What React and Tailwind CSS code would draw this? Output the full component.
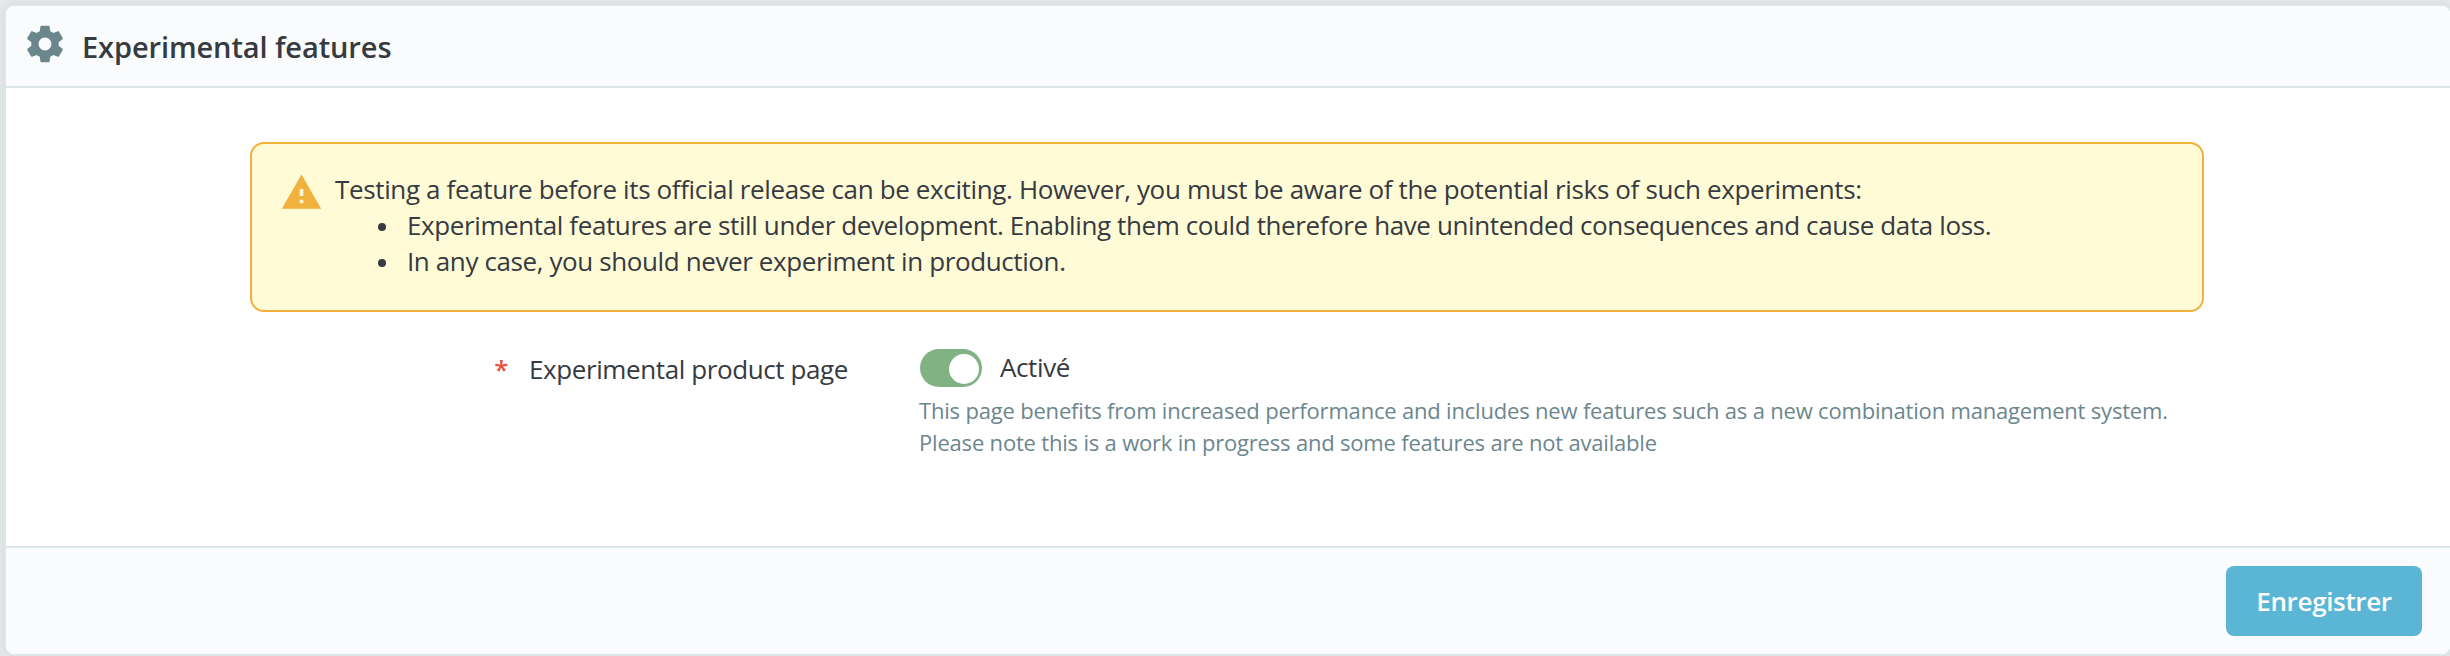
function GearIcon() {
  return (
    <svg viewBox="0 0 24 24" className="size-11 shrink-0 fill-[#6c868e]" aria-hidden="true">
      <path d="M19.43 12.98c.04-.32.07-.64.07-.98s-.03-.66-.07-.98l2.11-1.65c.19-.15.24-.42.12-.64l-2-3.46c-.12-.22-.39-.3-.61-.22l-2.49 1c-.52-.4-1.08-.73-1.69-.98l-.38-2.65C14.46 2.18 14.25 2 14 2h-4c-.25 0-.46.18-.49.42l-.38 2.65c-.61.25-1.17.59-1.69.98l-2.49-1c-.23-.09-.49 0-.61.22l-2 3.46c-.13.22-.07.49.12.64l2.11 1.65c-.04.32-.07.65-.07.98s.03.66.07.98l-2.11 1.65c-.19.15-.24.42-.12.64l2 3.46c.12.22.39.3.61.22l2.49-1c.52.4 1.08.73 1.69.98l.38 2.65c.03.24.24.42.49.42h4c.25 0 .46-.18.49-.42l.38-2.65c.61-.25 1.17-.59 1.69-.98l2.49 1c.23.09.49 0 .61-.22l2-3.46c.12-.22.07-.49-.12-.64l-2.11-1.65zM12 15.5c-1.93 0-3.5-1.57-3.5-3.5s1.57-3.5 3.5-3.5 3.5 1.57 3.5 3.5-1.57 3.5-3.5 3.5z" />
    </svg>
  );
}

function WarningIcon() {
  return (
    <svg viewBox="0 0 24 24" className="mt-[27px] size-[43px] shrink-0 fill-[#f0b23d]" aria-hidden="true">
      <path d="M1 21h22L12 2 1 21zm12-3h-2v-2h2v2zm0-4h-2v-4h2v4z" />
    </svg>
  );
}

function Warning() {
  return (
    <div className="ml-[244px] mt-[54px] flex h-[170px] w-[1954px] rounded-[14px] border-2 border-[#f0b23d] bg-[#fffbd7] pl-[28px]">
      <WarningIcon />
      <div className="ml-[12px] mt-[27px] whitespace-nowrap text-[26px] leading-[36px] tracking-[-0.39px]">
        <p className="tracking-[-0.36px]">
          Testing a feature before its official release can be exciting. However, you must be aware of the potential
          risks of such experiments:
        </p>
        <ul>
          {[
            'Experimental features are still under development. Enabling them could therefore have unintended consequences and cause data loss.',
            'In any case, you should never experiment in production.',
          ].map((item) => (
            <li key={item} className="flex items-center pl-[43px]">
              <span className="mr-[21px] mt-[3px] size-[8px] rounded-full bg-[#363a41]" />
              {item}
            </li>
          ))}
        </ul>
      </div>
    </div>
  );
}

export default function App() {
  return (
    <div className="flex h-[656px] w-[2450px] overflow-hidden bg-[#e6e8e9] pl-1 pt-1 font-['Open_Sans',sans-serif] text-[#363a41]">
      <section className="flex h-[652px] w-[2448px] shrink-0 flex-col overflow-hidden rounded-[10px] border-2 border-[#dbe6e9] bg-white shadow-[0_0_8px_rgba(0,0,0,0.08)]">
        <header className="flex h-[82px] shrink-0 items-start border-b-2 border-[#dbe6e9] bg-[#fafbfc] pl-[17px] pt-[16px]">
          <GearIcon />
          <h3 className="ml-[15px] mt-[6px] text-[29px] font-semibold leading-[38px] tracking-[-0.1px]">Experimental features</h3>
        </header>

        <div className="h-[458px] shrink-0">
          <Warning />
          <div className="flex pt-[35px]">
            <label className="flex w-[842px] justify-end whitespace-nowrap pt-[4px] text-[26px] leading-[36px] tracking-[-0.4px]">
              <span className="mr-[21px] font-semibold text-[#e8533d]">*</span>
              Experimental product page
            </label>
            <div className="ml-[71px] whitespace-nowrap">
              <div className="flex items-start">
                <button role="switch" aria-checked="true" aria-label="Experimental product page" className="ml-px mt-[2px] flex h-[38px] w-[62px] items-center justify-end rounded-full bg-[#80b283] pr-[3px] pt-px">
                  <span className="size-[30px] rounded-full bg-white" />
                </button>
                <span className="ml-[18px] mt-[2px] text-[26px] leading-[36px] tracking-[-0.4px]">Activé</span>
              </div>
              <p className="mt-[7px] text-[22px] leading-[32px] tracking-[-0.19px] text-[#6c868e]">
                This page benefits from increased performance and includes new features such as a new combination
                management system.
                <br />
                Please note this is a work in progress and some features are not available
              </p>
            </div>
          </div>
        </div>

        <footer className="flex h-[108px] shrink-0 items-start justify-end border-t-2 border-[#dbe6e9] bg-[#fafbfc] pr-[28px] pt-[18px]">
          <button className="h-[70px] w-[196px] rounded-[8px] bg-[#5bb5d5] text-[26px] font-semibold leading-[36px] tracking-[-0.35px] text-white">
            Enregistrer
          </button>
        </footer>
      </section>
    </div>
  );
}
